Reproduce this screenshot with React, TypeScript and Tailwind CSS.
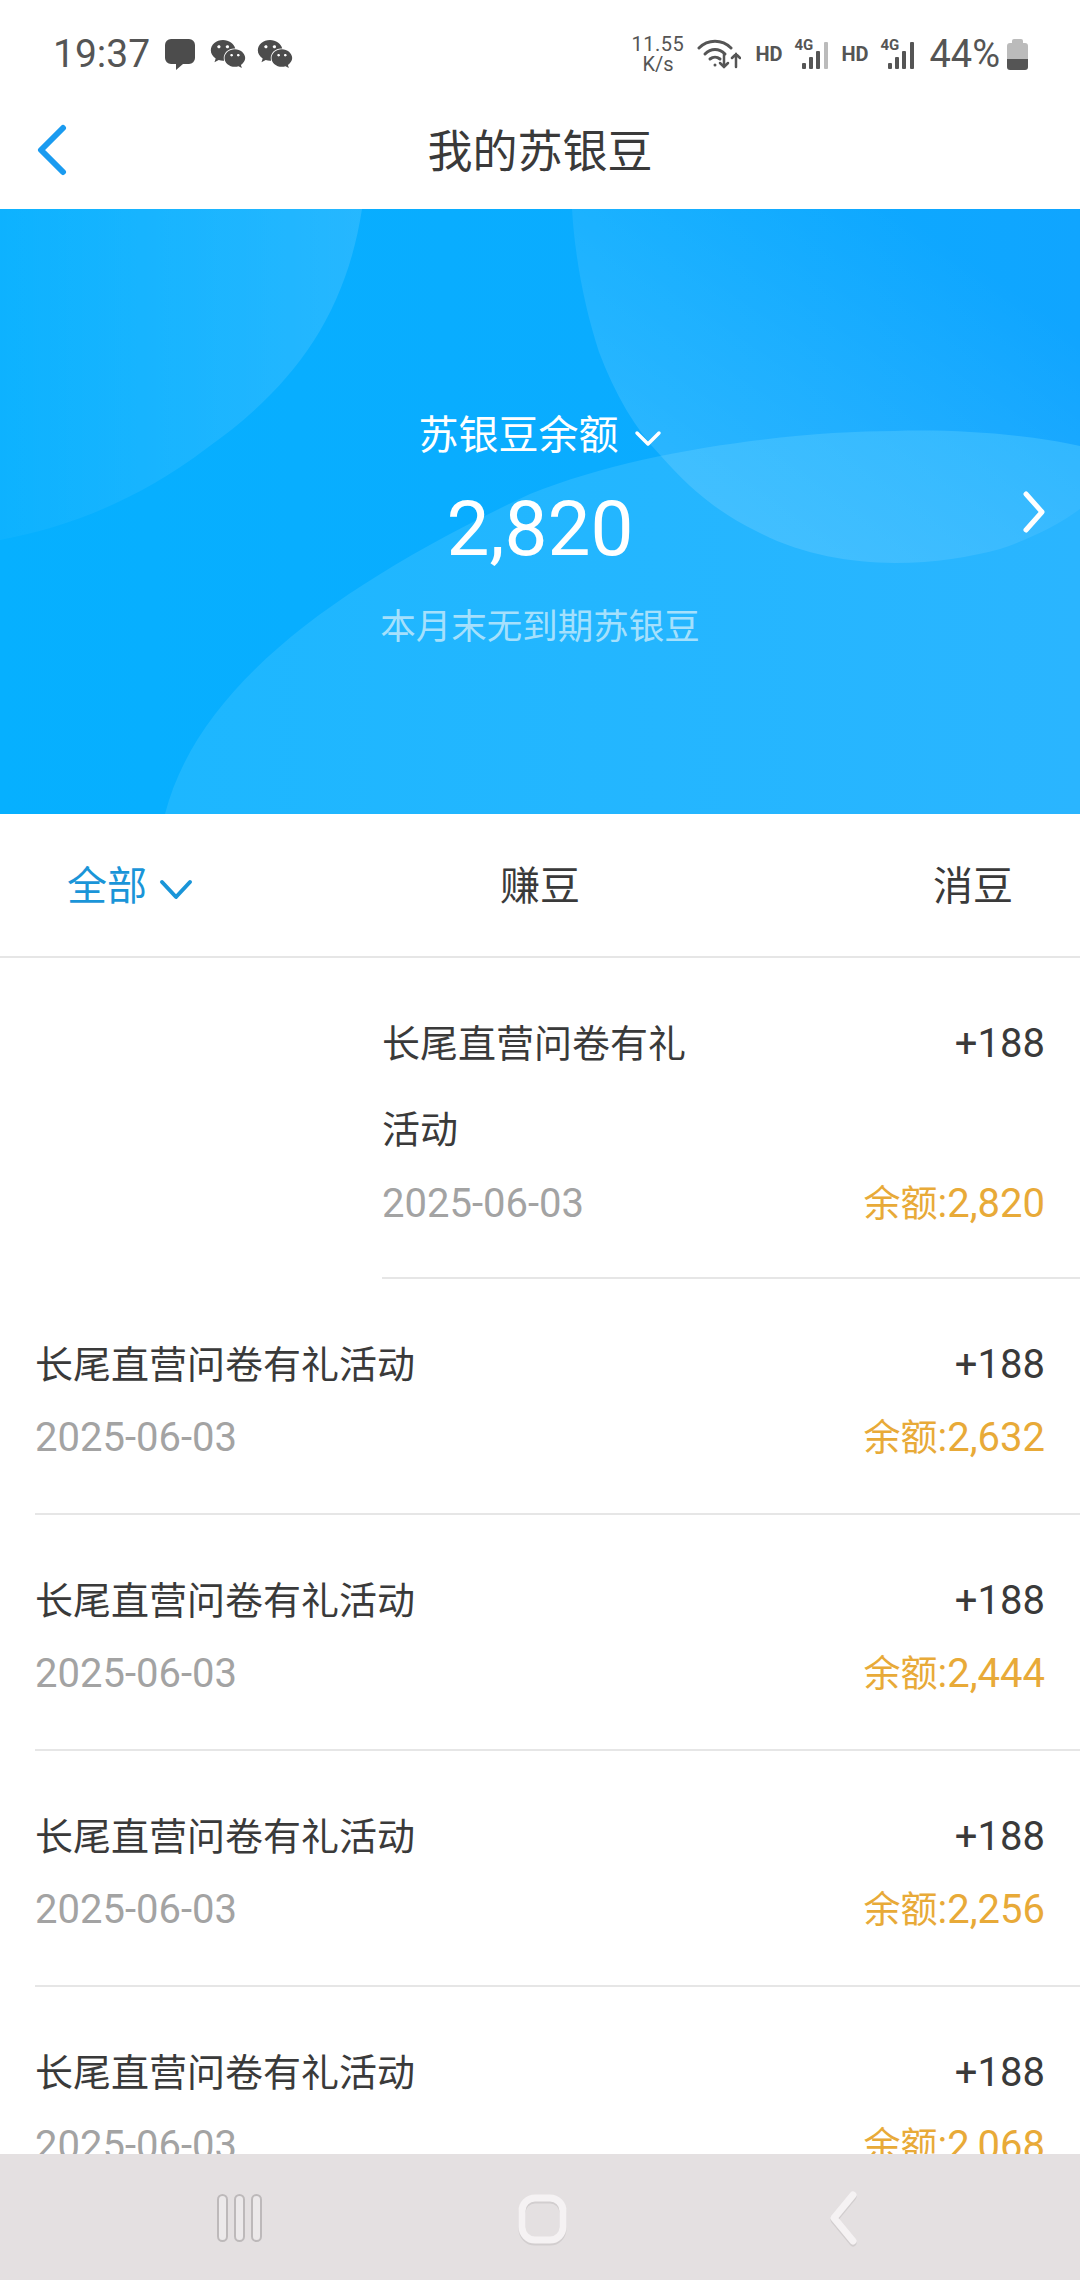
import { FaWeixin } from "react-icons/fa"

const cjk = "font-['Roboto','Noto_Sans_CJK_SC',sans-serif]"

const records = [
    { balance: "2,632" },
    { balance: "2,444" },
    { balance: "2,256" },
    { balance: "2,068" },
]

const Signal = ({ last }: { last: string }) => (
    <div className="relative w-[36px] h-[32px]">
        <span className="absolute left-0 top-0 text-[15px] leading-[15px] font-bold text-[#555]">4G</span>
        <svg className="absolute left-[8px] top-[4px]" width="28" height="28" viewBox="0 0 28 28">
            <rect x="0" y="21" width="4" height="6" rx="1" fill="#555" />
            <rect x="7" y="15" width="4" height="12" rx="1" fill="#555" />
            <rect x="14" y="9" width="4" height="18" rx="1" fill="#555" />
            <rect x="22" y="0" width="4" height="27" rx="1" fill={last} />
        </svg>
    </div>
)

const StatusBar = () => (
    <div className="h-[92px] flex items-center justify-between pl-[53px] pr-[52px] pt-[16px] text-[#555]">
        <div className="flex items-center">
            <span className="text-[39px] leading-[44px] w-[112px]">19:37</span>
            <svg width="30" height="31" viewBox="0 0 30 31" className="mr-[15px]">
                <path d="M6 0h18a6 6 0 0 1 6 6v13a6 6 0 0 1-6 6h-6l-7 6v-6H6a6 6 0 0 1-6-6V6a6 6 0 0 1 6-6z" fill="#4c4c4c" />
            </svg>
            <FaWeixin className="text-[36px] text-[#4c4c4c] mr-[11px]" />
            <FaWeixin className="text-[36px] text-[#4c4c4c]" />
        </div>
        <div className="flex items-center">
            <div className="flex flex-col items-center w-[53px] text-[20px] leading-[20px] mr-[13px]">
                <span className="tracking-[0.5px]">11.55</span>
                <span>K/s</span>
            </div>
            <svg width="44" height="32" viewBox="0 0 44 32" className="mr-[14px]" fill="none" stroke="#555" strokeWidth="3" strokeLinecap="round">
                <path d="M2 10C11 1 25 1 34 10" />
                <path d="M8 16C14 10 22 10 28 16" />
                <path d="M13 21c3-2.500 7-2.500 10 0" />
                <circle cx="18" cy="27" r="1.500" fill="#555" stroke="none" />
                <path d="M27 16v13M23 25l4 4 4-4" strokeWidth="2.500" />
                <path d="M39 29V16M35 20l4-4 4 4" strokeWidth="2.500" />
            </svg>
            <span className="text-[20px] font-bold w-[39px]">HD</span>
            <Signal last="#bbb" />
            <span className="text-[20px] font-bold w-[39px] ml-[11px]">HD</span>
            <Signal last="#555" />
            <span className="text-[38px] leading-[44px] ml-[13px] mr-[7px]">44%</span>
            <div className="flex flex-col items-center w-[21px]">
                <div className="w-[11px] h-[4px] bg-[#bbb] rounded-t-[2px]" />
                <div className="w-[21px] h-[16px] bg-[#bbb] rounded-t-[3px]" />
                <div className="w-[21px] h-[11px] bg-[#555] rounded-b-[3px]" />
            </div>
        </div>
    </div>
)

const Hero = () => (
    <div className="relative h-[605px] bg-[#0bacff] overflow-hidden flex flex-col items-center">
        <svg className="absolute inset-0" width="1080" height="605" viewBox="0 0 1080 605">
            <defs>
                <linearGradient id="hero-base" x1="0" y1="0" x2="1" y2="0">
                    <stop offset="0" stopColor="#06b0ff" />
                    <stop offset="0.55" stopColor="#0aacff" />
                    <stop offset="1" stopColor="#10a5ff" />
                </linearGradient>
                <linearGradient id="hero-left" x1="0" y1="0" x2="1" y2="0">
                    <stop offset="0" stopColor="#fff" stopOpacity="0.03" />
                    <stop offset="1" stopColor="#fff" stopOpacity="0.12" />
                </linearGradient>
                <linearGradient id="hero-wave" x1="0" y1="0" x2="1" y2="0">
                    <stop offset="0" stopColor="#1db7ff" />
                    <stop offset="1" stopColor="#2ab5ff" />
                </linearGradient>
                <linearGradient id="hero-circle" x1="0.1" y1="0.75" x2="0.75" y2="0.1">
                    <stop offset="0" stopColor="#fff" stopOpacity="0.14" />
                    <stop offset="0.45" stopColor="#fff" stopOpacity="0.08" />
                    <stop offset="1" stopColor="#fff" stopOpacity="0" />
                </linearGradient>
            </defs>
            <rect width="1080" height="605" fill="url(#hero-base)" />
            <path d="M0 0H362C345 110 290 180 207 239C140 290 70 318 0 331Z" fill="url(#hero-left)" />
            <path d="M165 605C200 470 350 370 530 285C640 240 800 222 895 222C960 220 1030 226 1080 237V605Z" fill="url(#hero-wave)" />
            <path d="M572 0C575 50 585 100 599 143C615 185 635 220 661 247C690 280 720 305 758 323C800 345 850 354 895 354C935 354 970 348 1000 340C1030 330 1060 315 1080 300V0Z" fill="url(#hero-circle)" />
        </svg>
        <div className={`relative mt-[197px] flex items-center text-white text-[40px] leading-[60px] ${cjk}`}>
            <span>苏银豆余额</span>
            <svg width="28" height="18" viewBox="0 0 28 18" fill="none" stroke="#fff" strokeWidth="3.500" strokeLinecap="round" strokeLinejoin="round" className="ml-[15px] mt-[6px]">
                <path d="M3 3l11 11L25 3" />
            </svg>
        </div>
        <div className="relative text-white text-[76.5px] leading-[90px] mt-[18px] font-['Roboto',sans-serif]">2,820</div>
        <div className={`relative text-[#a5e0fc] text-[35.5px] leading-[50px] mt-[28px] ${cjk}`}>本月末无到期苏银豆</div>
        <svg width="24" height="42" viewBox="0 0 24 42" fill="none" stroke="#fff" strokeWidth="5" strokeLinecap="round" strokeLinejoin="round" className="absolute right-[34px] top-[282px]">
            <path d="M4 3l16 18L4 39" />
        </svg>
    </div>
)

const Tabs = () => (
    <div className={`h-[144px] pt-[4px] grid grid-cols-3 items-center px-[67px] text-[40px] text-[#3a3a3a] border-b-2 border-[#e6e6e6] ${cjk}`}>
        <div className="flex items-center text-[#1a95d8]">
            <span>全部</span>
            <svg width="34" height="22" viewBox="0 0 34 22" fill="none" stroke="#1a95d8" strokeWidth="4" strokeLinecap="round" strokeLinejoin="round" className="ml-[12px] mt-[6px]">
                <path d="M3 3l14 15L31 3" />
            </svg>
        </div>
        <span className="justify-self-center">赚豆</span>
        <span className="justify-self-end">消豆</span>
    </div>
)

const Amount = ({ balance }: { balance: string }) => (
    <div className="text-[#e8aa38] text-[40px]">
        <span className="text-[37px]">余额</span>:{balance}
    </div>
)

const Record = ({ balance }: { balance: string }) => (
    <div className={`ml-[35px] pt-[43px] pb-[44px] pr-[35px] border-b-2 border-[#e6e6e6] ${cjk}`}>
        <div className="flex justify-between leading-[86px] text-[#3a3a3a]">
            <span className="text-[38px]">长尾直营问卷有礼活动</span>
            <span className="text-[40px]">+188</span>
        </div>
        <div className="flex justify-between leading-[60px]">
            <span className="text-[#a3a3a3] text-[40px]">2025-06-03</span>
            <Amount balance={balance} />
        </div>
    </div>
)

const NavBar = () => (
    <div className="h-[126px] bg-[#e4e0e1] flex items-center shrink-0 relative">
        <svg width="1080" height="70" viewBox="0 0 1080 70" fill="none" className="mt-[2px]">
            <g stroke="#bdb9ba" strokeWidth="2" fill="#ece9ea">
                <rect x="218" y="12" width="9" height="46" rx="4.500" />
                <rect x="235" y="12" width="9" height="46" rx="4.500" />
                <rect x="252" y="12" width="9" height="46" rx="4.500" />
            </g>
            <rect x="522" y="17" width="41" height="42" rx="13" stroke="#d2cecf" strokeWidth="7" />
            <rect x="522" y="15" width="41" height="42" rx="13" stroke="#f5f2f3" strokeWidth="7" />
            <path d="M853 14L834 37l19 23" stroke="#d2cecf" strokeWidth="7" strokeLinecap="round" strokeLinejoin="round" />
            <path d="M853 12L834 35l19 23" stroke="#f5f2f3" strokeWidth="7" strokeLinecap="round" strokeLinejoin="round" />
        </svg>
    </div>
)

const App = () => {
    return (
        <div className={`w-[1080px] h-[2280px] bg-white flex flex-col overflow-hidden ${cjk}`}>
            <StatusBar />
            <div className="h-[117px] pt-[4px] relative flex items-center justify-center shrink-0">
                <svg width="32" height="52" viewBox="0 0 32 52" fill="none" stroke="#1a9bf0" strokeWidth="6" strokeLinecap="round" strokeLinejoin="round" className="absolute left-[36px] top-[32px]">
                    <path d="M27 4L5 26l22 22" />
                </svg>
                <span className="text-[45px] text-[#3a3a3a]">我的苏银豆</span>
            </div>
            <Hero />
            <Tabs />
            <div className="flex-1 overflow-hidden">
                <div className={`ml-[382px] pt-[43px] pb-[42px] pr-[35px] border-b-2 border-[#e6e6e6] ${cjk}`}>
                    <div className="flex justify-between leading-[86px] text-[#3a3a3a]">
                        <span className="text-[38px] w-[310px]">长尾直营问卷有礼活动</span>
                        <span className="text-[40px]">+188</span>
                    </div>
                    <div className="flex justify-between leading-[60px] mt-[1px]">
                        <span className="text-[#a3a3a3] text-[40px]">2025-06-03</span>
                        <Amount balance="2,820" />
                    </div>
                </div>
                {records.map((r) => (
                    <Record key={r.balance} balance={r.balance} />
                ))}
            </div>
            <NavBar />
        </div>
    )
}

export default App
